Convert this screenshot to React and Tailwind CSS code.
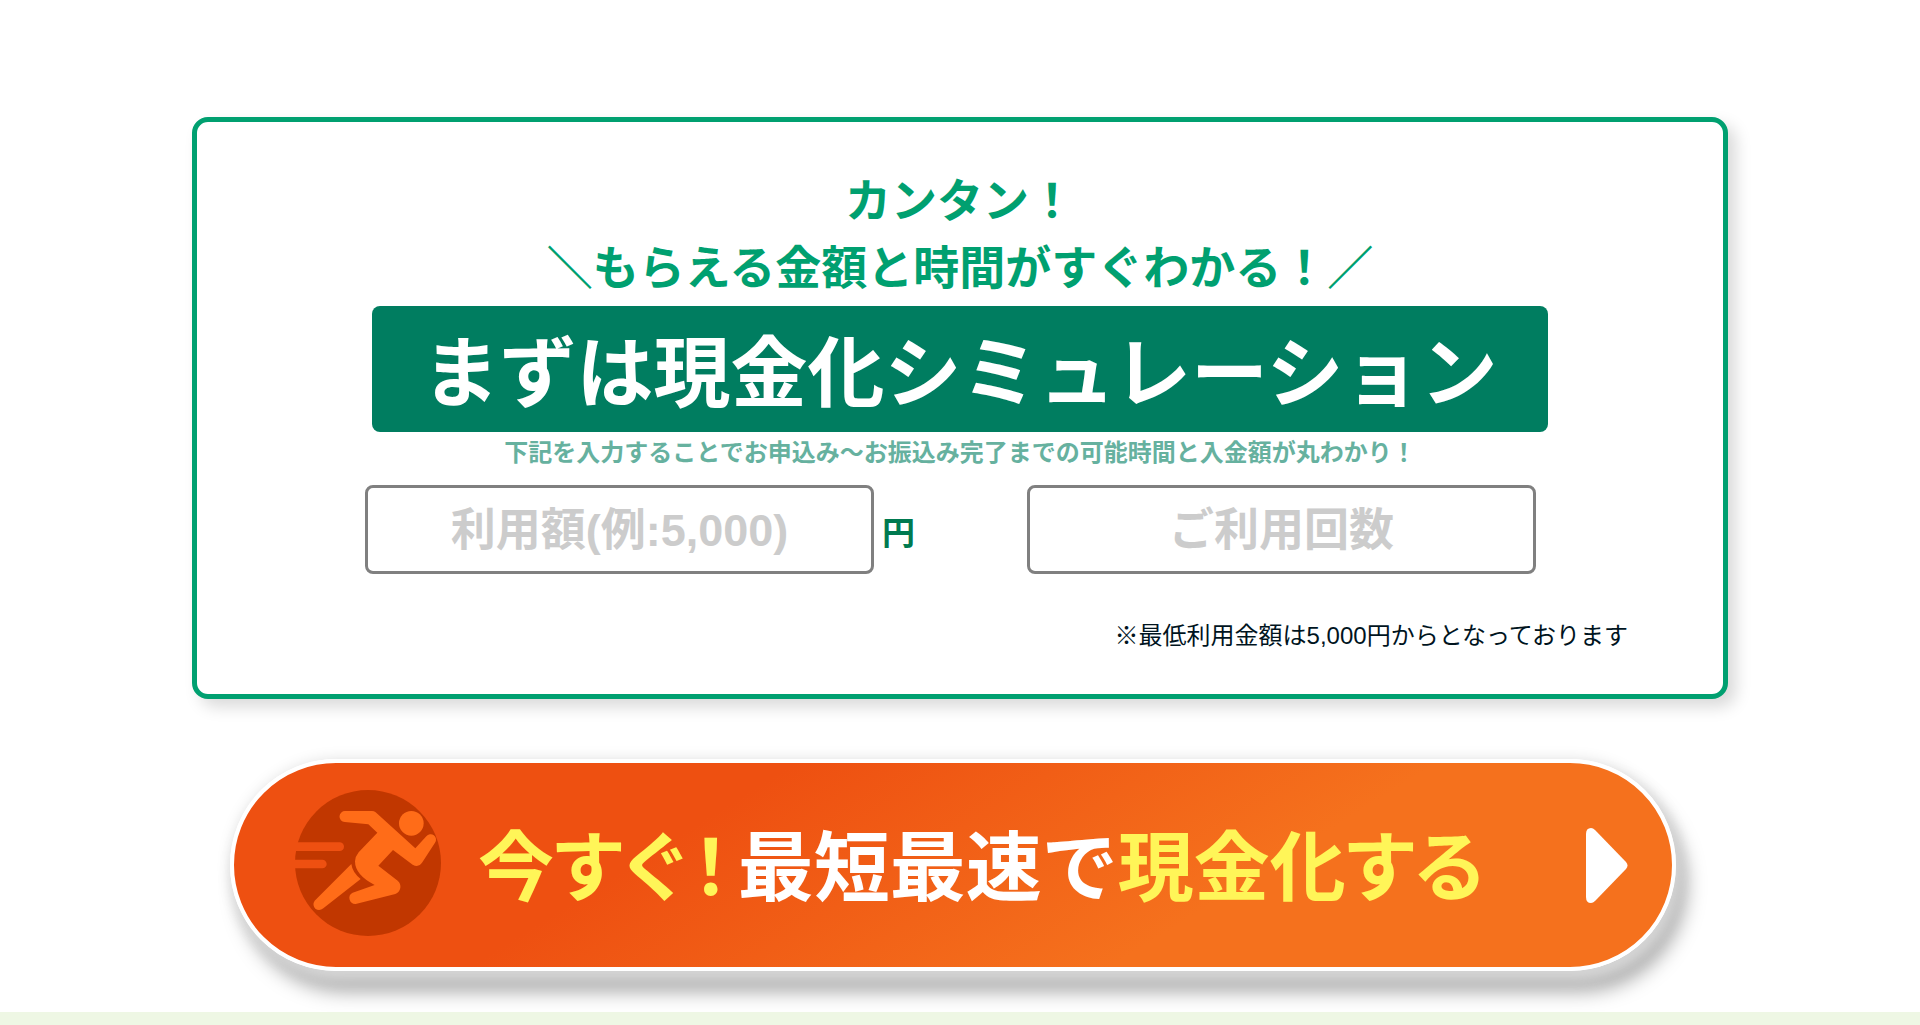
import React, { useState } from 'react';

const fieldClass =
  "h-[89px] min-w-0 flex-1 rounded-lg border-[3px] border-[#808080] bg-white px-4 pt-0.5 text-center text-[45px] font-bold text-[#007d60] placeholder:text-[#ccc] placeholder:opacity-100 focus:outline-none";

function RunnerIcon() {
  return (
    <svg className="mb-1 size-[146px] shrink-0" viewBox="27 30 438 438" aria-hidden="true">
      <circle cx="246" cy="249" r="219" fill="#c13700" />
      {/* speed lines */}
      <rect x="10" y="187" width="164" height="26" rx="13" fill="#ee5011" />
      <rect x="10" y="239" width="112" height="26" rx="13" fill="#ee5011" />
      <g fill="#ff6c18">
        <circle cx="376" cy="130" r="37" />
        <path d="M178 93H258Q264 93 269 97L388 205L421 169A16 16 0 0 1 447 188L409 247Q398 264 380 254L321 210L277 257L335 302Q345 311 343 324Q340 337 328 342L209 372A18 18 0 0 1 200 338L266 315Q207 285 207 244Q208 229 218 217L274 158L247 133L176 126A16 16 0 0 1 178 93Z" />
        <path d="M196 252Q199 277 224 297L112 385Q100 394 88 386Q78 374 86 362Z" />
      </g>
    </svg>
  );
}

function ArrowIcon() {
  return (
    <svg className="h-[75px] w-[42px] shrink-0" viewBox="0 0 42 75" aria-hidden="true">
      <path
        d="M0 6Q0 0 5 0Q7 0 9 2L40 34Q43 37.500 40 41L9 73Q7 75 5 75Q0 75 0 69Z"
        fill="#fff"
      />
    </svg>
  );
}

export default function App() {
  const [amount, setAmount] = useState('');
  const [count, setCount] = useState('');

  return (
    <div className="flex min-h-screen flex-col bg-white font-['Liberation_Sans','Noto_Sans_CJK_JP',sans-serif]">
      <main className="mx-auto w-4/5 pt-[117px] pb-[41px]">
        {/* Simulation card */}
        <section className="rounded-2xl border-[5px] border-[#00a070] bg-white pt-[46px] pb-10 shadow-[8px_8px_16px_rgba(0,0,0,0.15)]">
          <p className="text-center text-[46px] leading-[67px] font-bold text-[#00a070]">
            カンタン！
            <br />
            ＼もらえる金額と時間がすぐわかる！／
          </p>
          <h1 className="mx-auto mt-1 w-fit rounded-lg bg-[#007d60] px-[51px] pt-3 pb-0.5 text-[77px] leading-[112px] font-bold text-white">
            まずは現金化シミュレーション
          </h1>
          <p className="mt-[3px] text-center text-2xl leading-9 font-bold text-[#66b19f]">
            下記を入力することでお申込み〜お振込み完了までの可能時間と入金額が丸わかり！
          </p>

          <form className="mt-3.5 flex items-center pr-[187px] pl-[168px]" onSubmit={(e) => e.preventDefault()}>
            <input
              type="text"
              inputMode="numeric"
              aria-label="利用額"
              placeholder="利用額(例:5,000)"
              value={amount}
              onChange={(e) => setAmount(e.target.value)}
              className={fieldClass}
            />
            <span className="mr-28 ml-2 pt-2 text-[33px] leading-[48px] font-bold text-[#007a50]">円</span>
            <input
              type="text"
              inputMode="numeric"
              aria-label="ご利用回数"
              placeholder="ご利用回数"
              value={count}
              onChange={(e) => setCount(e.target.value)}
              className={fieldClass}
            />
          </form>

          <p className="mt-11 pr-[95px] text-right text-2xl leading-9 text-[#00141e]">
            ※最低利用金額は5,000円からとなっております
          </p>
        </section>

        {/* CTA */}
        <div className="mt-[60px] pr-[52px] pl-[38px]">
          <a
            href="#apply"
            className="flex h-[212px] items-center rounded-full border-4 border-white bg-[linear-gradient(148deg,#ee5011_32%,#f5711d_68%)] bg-origin-border pr-11 pl-[61px] shadow-[5px_10px_12px_rgba(255,255,255,0.6),10px_20px_20px_rgba(0,0,0,0.36),2px_2px_16px_rgba(0,0,0,0.15)]"
          >
            <RunnerIcon />
            <span className="flex-1 pt-2 pl-[37px] text-[76px] leading-[112px] font-bold whitespace-nowrap text-white">
              <span className="text-[#fff558] [font-feature-settings:'palt']">
                今すぐ<span className="mx-2">！</span>
              </span>
              最短最速で
              <span className="text-[#fff558] [font-feature-settings:'palt']">現金化する</span>
            </span>
            <ArrowIcon />
          </a>
        </div>
      </main>
      <div className="min-h-[13px] flex-1 bg-[#eef7e4]" />
    </div>
  );
}
